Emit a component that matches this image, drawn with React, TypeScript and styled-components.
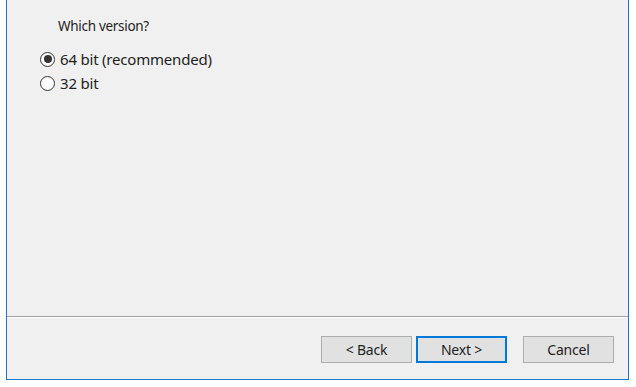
import styled, { createGlobalStyle } from 'styled-components';

const GlobalStyle = createGlobalStyle`
  html, body {
    margin: 0;
    padding: 0;
    background: #ffffff;
  }
  body {
    font-family: "Noto Sans", "Liberation Sans", sans-serif;
    font-size: 14.5px;
    color: #000;
  }
`;

const Page = styled.div`
  width: 636px;
  height: 387px;
  padding-left: 6px;
  box-sizing: border-box;
`;

const Window = styled.div`
  width: 623px;
  height: 380px;
  box-sizing: border-box;
  background: #f0f0f0;
  border: 1px solid #1979ca;
  border-top: none;
  display: flex;
  flex-direction: column;
`;

const Content = styled.div`
  height: 316px;
  box-sizing: border-box;
  padding: 16px 0 0 33px;
  display: flex;
  flex-direction: column;
`;

const Heading = styled.div`
  margin-left: 18px;
  line-height: 20px;
  font-size: 13.5px;
  letter-spacing: -0.3px;
  color: #1e1e1e;
`;

const Options = styled.div`
  margin-top: 11px;
  display: flex;
  flex-direction: column;
`;

const Option = styled.label`
  height: 24px;
  display: flex;
  align-items: center;
  gap: 5px;
  font-size: 15px;
  letter-spacing: -0.2px;
  color: #1e1e1e;
`;

const Circle = styled.span<{ $checked?: boolean }>`
  width: 15px;
  height: 15px;
  box-sizing: border-box;
  border-radius: 50%;
  border: 1px solid #333;
  background: #fff;
  display: flex;
  align-items: center;
  justify-content: center;

  &::after {
    content: '';
    width: 8px;
    height: 8px;
    border-radius: 50%;
    background: ${(p) => (p.$checked ? '#333' : 'transparent')};
  }
`;

const Separator = styled.div`
  height: 1px;
  background: #a0a0a0;
  border-bottom: 1px solid #ffffff;
`;

const Footer = styled.div`
  flex: 1;
  display: flex;
  justify-content: flex-end;
  align-items: flex-start;
  padding: 18px 14px 0 0;
`;

const Button = styled.button<{ $primary?: boolean; $gap?: number }>`
  width: 91px;
  height: 27px;
  box-sizing: border-box;
  margin-left: ${(p) => p.$gap ?? 0}px;
  background: #e1e1e1;
  border: ${(p) => (p.$primary ? '2px solid #0078d7' : '1px solid #adadad')};
  font-family: "Noto Sans", "Liberation Sans", sans-serif;
  font-size: 14px;
  letter-spacing: -0.2px;
  color: #1e1e1e;
  padding: 0;
  line-height: 1;
`;

function App() {
  return (
    <>
      <GlobalStyle />
      <Page>
        <Window>
          <Content>
            <Heading>Which version?</Heading>
            <Options>
              <Option>
                <Circle $checked />
                64 bit (recommended)
              </Option>
              <Option>
                <Circle />
                32 bit
              </Option>
            </Options>
          </Content>
          <Separator />
          <Footer>
            <Button>&lt; Back</Button>
            <Button $primary $gap={4}>
              Next &gt;
            </Button>
            <Button $gap={16}>Cancel</Button>
          </Footer>
        </Window>
      </Page>
    </>
  );
}

export default App;
